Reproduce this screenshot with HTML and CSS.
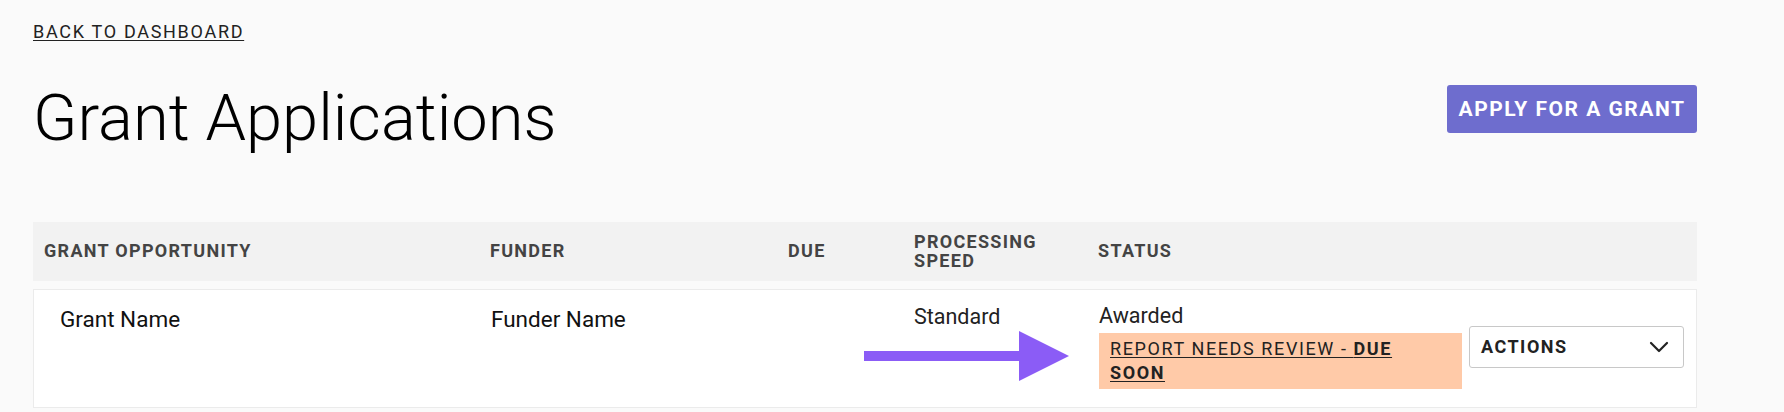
FILE: index.html
```html
<!DOCTYPE html>
<html lang="en">
<head>
<meta charset="utf-8">
<title>Grant Applications</title>
<link rel="stylesheet" href="styles.css">
</head>
<body>
<div class="page">
  <a class="back" href="#">BACK TO DASHBOARD</a>
  <div class="head">
    <h1 class="title">Grant Applications</h1>
    <button class="apply" type="button">APPLY FOR A GRANT</button>
  </div>
  <div class="table">
    <div class="trow thead">
      <div class="th">GRANT OPPORTUNITY</div>
      <div class="th">FUNDER</div>
      <div class="th">DUE</div>
      <div class="th">PROCESSING SPEED</div>
      <div class="th">STATUS</div>
    </div>
    <div class="trow tbody">
      <div class="td td-name">Grant Name</div>
      <div class="td td-funder">Funder Name</div>
      <div class="td td-due"></div>
      <div class="td td-speed">Standard</div>
      <div class="td td-status">
        <div class="status-info">
          <div class="status-label">Awarded</div>
          <a class="badge" href="#">REPORT NEEDS REVIEW - <b>DUE SOON</b></a>
        </div>
        <button class="actions" type="button">
          <span>ACTIONS</span>
          <svg class="chev" width="20" height="12" viewBox="0 0 20 12"><polyline points="2,2 10,10 18,2" fill="none" stroke="#222" stroke-width="2.2" stroke-linecap="round" stroke-linejoin="round"/></svg>
        </button>
      </div>
      <svg class="arrow" width="205" height="50" viewBox="0 0 205 50"><rect x="0" y="20" width="157" height="10" fill="#8b5cf6"/><polygon points="155,0 205,25 155,50" fill="#8b5cf6"/></svg>
    </div>
  </div>
</div>
</body>
</html>
```

FILE: styles.css
```css
html, body {
  margin: 0;
  padding: 0;
  background: #fafafa;
}

body {
  font-family: Roboto, "Liberation Sans", Arial, sans-serif;
  color: #222;
}

.page {
  width: 1664px;
  padding: 21px 0 0 33px;
}

.back {
  display: inline-block;
  font-size: 18px;
  font-weight: 400;
  letter-spacing: 1.7px;
  color: #222;
  text-decoration: underline;
  text-decoration-thickness: 1px;
  text-underline-offset: 2px;
}

.head {
  display: flex;
  justify-content: space-between;
  align-items: flex-start;
  margin-top: 39px;
}

.title {
  margin: 0;
  font-size: 65px;
  line-height: 75px;
  font-weight: 300;
  color: #000;
}

.apply {
  margin-top: 4px;
  width: 250px;
  height: 48px;
  background: #6e6dce;
  color: #fff;
  border: none;
  border-radius: 3px;
  font-family: Roboto, "Liberation Sans", Arial, sans-serif;
  font-size: 21px;
  font-weight: 700;
  letter-spacing: 1.5px;
  padding: 0;
}

.table {
  margin-top: 66px;
}

.trow {
  display: grid;
  grid-template-columns: 446px 298px 126px 184px 1fr;
  border: 1px solid transparent;
}

.thead {
  background: #f2f2f2;
  min-height: 57px;
  align-items: center;
}

.th {
  padding: 0 10px 2px;
  font-size: 18px;
  line-height: 19px;
  font-weight: 700;
  letter-spacing: 1.3px;
  color: #444;
}

.tbody {
  position: relative;
  margin-top: 8px;
  background: #fff;
  border-color: #ebebeb;
}

.td {
  color: #111;
}

.td-name {
  padding: 16px 10px 0 26px;
  font-size: 22.5px;
}

.td-funder {
  padding: 16px 10px 0 11px;
  font-size: 22.5px;
}

.td-speed {
  padding: 14px 10px 0 10px;
  font-size: 21.5px;
  color: #222;
}

.td-status {
  display: flex;
  align-items: center;
  gap: 7px;
  padding: 14px 12px 18px 11px;
}

.status-info {
  flex: 1;
  min-width: 0;
}

.status-label {
  font-size: 21.5px;
  line-height: 24px;
  color: #222;
}

.badge {
  display: block;
  margin-top: 5px;
  background: #ffcaa8;
  padding: 4px 11px;
  font-size: 18px;
  line-height: 24px;
  letter-spacing: 1.6px;
  color: #222;
  text-decoration: underline;
  text-decoration-thickness: 1px;
  text-underline-offset: 2px;
}

.badge b {
  font-weight: 700;
}

.actions {
  width: 215px;
  height: 42px;
  flex: none;
  display: flex;
  align-items: center;
  justify-content: space-between;
  padding: 0 14px 0 11px;
  background: #fff;
  border: 1px solid #c8c8c8;
  border-radius: 3px;
  font-family: Roboto, "Liberation Sans", Arial, sans-serif;
  font-size: 18px;
  font-weight: 700;
  letter-spacing: 1.5px;
  color: #222;
}

.chev {
  display: block;
}

.arrow {
  position: absolute;
  left: 830px;
  top: 41px;
}
```
